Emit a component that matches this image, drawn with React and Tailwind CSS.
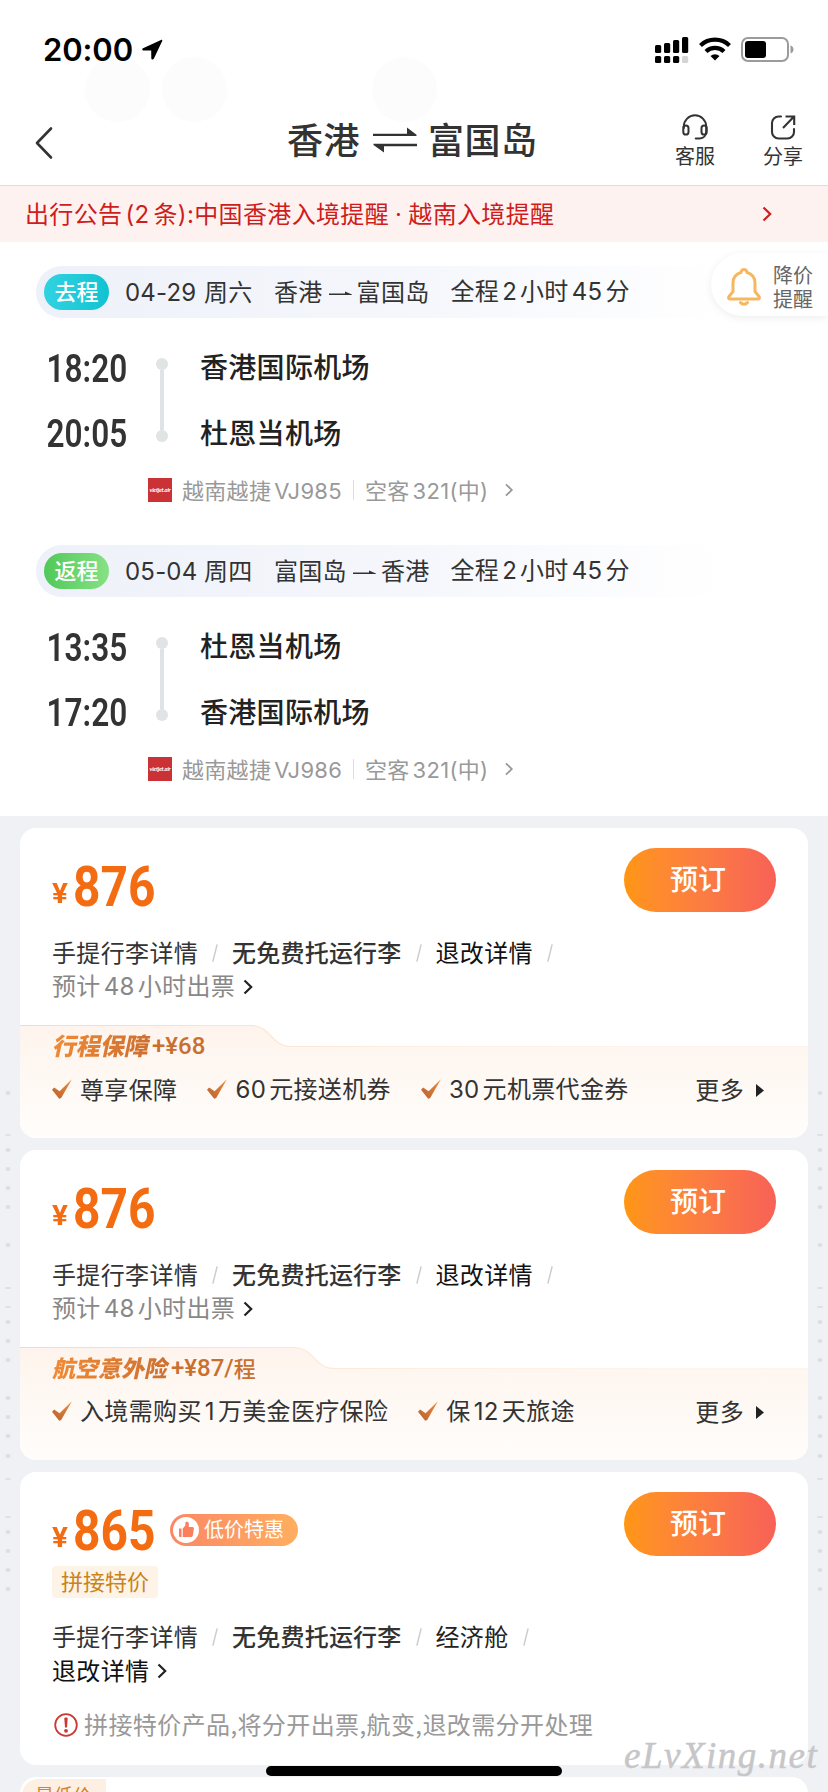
import clsx from 'clsx'

const LEGS = [
    {
        tag: '去程',
        tagClass: 'bg-gradient-to-r from-[#30d2e0] to-[#0fc3d2]',
        date: '04-29',
        week: '周六',
        from: '香港',
        to: '富国岛',
        rows: [
            { time: '18:20', airport: '香港国际机场' },
            { time: '20:05', airport: '杜恩当机场' },
        ],
        flight: '越南越捷VJ985',
    },
    {
        tag: '返程',
        tagClass: 'bg-gradient-to-r from-[#4fc957] to-[#86e186]',
        date: '05-04',
        week: '周四',
        from: '富国岛',
        to: '香港',
        rows: [
            { time: '13:35', airport: '杜恩当机场' },
            { time: '17:20', airport: '香港国际机场' },
        ],
        flight: '越南越捷VJ986',
    },
]

const DOTS = [1093, 1150, 1169, 1188, 1207, 1245, 1322, 1341, 1360, 1398, 1417, 1436, 1456, 1532, 1551, 1570, 1589]
const DASHES = [1135, 1288, 1307, 1479, 1517]

// Chinese copy with latin runs set in Inter and a hair of space next to the hanzi
function Mixed({ text }) {
    return text.split(/([0-9A-Za-z]+)/).map((part, i, parts) =>
        i % 2 ? (
            <span key={i} className={clsx("font-['Inter']", parts[i - 1] && 'ml-[3px]', parts[i + 1] && 'mr-[3px]')}>
                {part}
            </span>
        ) : (
            part
        )
    )
}

function Chevron({ className }) {
    return (
        <svg viewBox="0 0 10 16" className={className} fill="none" stroke="currentColor">
            <path d="M1.5 1.5 8.2 8l-6.7 6.5" />
        </svg>
    )
}

function StatusBar() {
    return (
        <div className="flex h-24 items-start pl-[43px] pr-[34px] pt-8 text-black">
            <span className="font-['Inter'] text-[31px] font-semibold leading-9 tracking-[-0.1px]">20:00</span>
            <svg viewBox="0 0 22 22" className="ml-2 mt-[7px] size-[22px]">
                <path d="M20 1 2 9.200c-1.200.6-.9 2.200.4 2.200h7.800l.1 7.800c0 1.500 1.900 1.800 2.500.5L21.200 2.100C21.600 1.200 20.800.6 20 1Z" fill="currentColor" />
            </svg>
            <div className="ml-auto flex items-start pt-[4px]">
                <svg viewBox="0 0 34 28" className="mt-[1px] h-7 w-[34px]">
                    <rect x="0" y="8" width="6.200" height="8" rx="1.500" />
                    <rect x="9" y="6" width="6.200" height="10" rx="1.500" />
                    <rect x="18" y="3" width="6.200" height="13" rx="1.500" />
                    <rect x="27" y="0" width="6.200" height="16" rx="1.500" />
                    <rect x="0" y="19" width="6.200" height="7" rx="1.500" />
                    <rect x="9" y="19" width="6.200" height="7" rx="1.500" />
                    <rect x="18" y="19" width="6.200" height="7" rx="1.500" />
                    <rect x="27" y="19" width="6.200" height="7" rx="1.500" fill="#d4d4d4" />
                </svg>
                <svg viewBox="0 0 32 24" className="ml-[10px] mt-[1px] h-6 w-8" fill="none" stroke="#000" strokeWidth="4.200">
                    <path d="M1.500 8.500a21 21 0 0 1 29 0" />
                    <path d="M7 14.500a13 13 0 0 1 18 0" />
                    <path d="M16 23.500l-4.500-4.600a6.600 6.600 0 0 1 9 0Z" fill="#000" stroke="none" />
                </svg>
                <svg viewBox="0 0 53 25" className="ml-[10px] mt-[1px] h-[25px] w-[53px]">
                    <rect x="1" y="1" width="46" height="23" rx="6" fill="none" stroke="#9b9b9b" strokeWidth="2" />
                    <rect x="4" y="4" width="21" height="17" rx="3" />
                    <path d="M49.500 8.500c2 .6 3 2.200 3 4s-1 3.400-3 4Z" fill="#9b9b9b" />
                </svg>
            </div>
        </div>
    )
}

function Header() {
    return (
        <header className="flex h-[90px] items-start text-[#333]">
            <svg viewBox="0 0 20 34" className="ml-[34px] mt-[30px] h-[34px] w-5" fill="none" stroke="currentColor" strokeWidth="2.600" strokeLinecap="round" strokeLinejoin="round">
                <path d="M17 2.500 3 17l14 14.500" />
            </svg>
            <h1 className="ml-[233px] mt-[17px] flex items-center whitespace-nowrap text-[36px] font-medium leading-[50px] tracking-[0.5px]">
                <span>香港</span>
                <svg viewBox="0 0 46 28" className="ml-[12px] mr-[10px] mt-[4px] h-7 w-[46px]" fill="currentColor">
                    <path d="M1 7.700h34V1.500l9.500 7.300v1.200H1Z" />
                    <path d="M45 20.300H12v6.300L1.500 19v-1.200H45Z" />
                </svg>
                <span>富国岛</span>
            </h1>
            <div className="ml-auto mr-[25px] mt-[18px] flex gap-[48px] text-[20px] leading-7">
                <div className="flex w-10 flex-col items-center">
                    <svg viewBox="0 0 26 26" className="size-[26px]" fill="none" stroke="currentColor" strokeWidth="2" strokeLinecap="round">
                        <path d="M1.800 14v-1.500a11.200 11.200 0 0 1 22.400 0V17c0 4.500-2.500 7.500-6.500 7.500h-4" />
                        <rect x="1.300" y="11.500" width="5.200" height="9" rx="2.600" />
                        <rect x="19.500" y="11.500" width="5.200" height="9" rx="2.600" />
                    </svg>
                    <span className="mt-[2px]">客服</span>
                </div>
                <div className="flex w-10 flex-col items-center">
                    <svg viewBox="0 0 26 26" className="size-[26px]" fill="none" stroke="currentColor" strokeWidth="2.100">
                        <path d="M11 2.500H8.500a6.500 6.500 0 0 0-6.500 6.500v9a6.500 6.500 0 0 0 6.500 6.500h9A6.500 6.500 0 0 0 24 18v-3" strokeLinecap="round" />
                        <path d="M15.500 2.500h8.700V11M23.500 3 13 14" />
                    </svg>
                    <span className="mt-[2px]">分享</span>
                </div>
            </div>
        </header>
    )
}

function Leg({ leg }) {
    return (
        <section className="h-[279px]">
            <div className="ml-9 flex h-[52px] w-[690px] items-center rounded-l-full bg-gradient-to-r from-[#eef1f9] via-[#f5f7fc] via-55% to-white pl-2">
                <span className={clsx('flex h-9 w-[65px] justify-center rounded-full text-[22px] font-medium leading-[33px] text-white', leg.tagClass)}>
                    {leg.tag}
                </span>
                <div className="flex items-center whitespace-nowrap pb-[2px] text-[24px] tracking-[0.3px] text-[#333]">
                    <span className="ml-[16px] mt-[3px] w-[79px] font-['Inter'] tracking-[0.2px]">{leg.date}</span>
                    <span className="w-[70px]">{leg.week}</span>
                    <span>{leg.from}</span>
                    <svg viewBox="0 0 24 10" className="ml-[6px] mr-[4px] mt-[5px] h-[10px] w-6">
                        <path d="M0 6h23v-.6L16 2.500v2H0Z" fill="#333" />
                    </svg>
                    <span>{leg.to}</span>
                    <span className="ml-[21px]">
                        <Mixed text="全程2小时45分" />
                    </span>
                </div>
            </div>
            <div className="mt-[17px] flex">
                <div className="flex w-[127px] flex-col items-end pt-[2px]">
                    {leg.rows.map((row) => (
                        <span key={row.time} className="h-[65px] origin-right scale-x-[0.83] font-['Roboto'] text-[38px] font-semibold leading-[65px] text-[#333]">
                            {row.time}
                        </span>
                    ))}
                </div>
                <div className="ml-[29px] mt-[23px] flex w-3 flex-col items-center">
                    <i className="size-3 rounded-full bg-[#e0e4e4]" />
                    <i className="h-[60px] w-1 bg-[#e0e3e5]" />
                    <i className="size-3 rounded-full bg-[#e0e4e4]" />
                </div>
                <div className="ml-[32px] flex flex-col text-[28px] font-medium tracking-[0.3px] text-[#222]">
                    {leg.rows.map((row) => (
                        <span key={row.airport} className="h-[66px] leading-[62px]">
                            {row.airport}
                        </span>
                    ))}
                </div>
            </div>
            <div className="ml-[148px] mt-[11px] flex h-[24px] items-center whitespace-nowrap text-[22px] leading-6 text-[#999]">
                <span className="flex size-6 items-center justify-center overflow-hidden bg-[#cb3236] font-['Lato'] text-[6px] font-bold italic tracking-[-0.3px] text-white">
                    vietjet.air
                </span>
                <span className="ml-[10px] w-[171px] tracking-[0.3px]">
                    <Mixed text={leg.flight} />
                </span>
                <i className="h-5 w-px bg-[#ddd]" />
                <span className="ml-[11px] tracking-[0.3px]">
                    空客<span className="ml-[3px] font-['Inter']">321(</span>中<span className="font-['Inter']">)</span>
                </span>
                <Chevron className="ml-[16px] h-[14px] w-[10px] stroke-[2]" />
            </div>
        </section>
    )
}

function Check() {
    return (
        <svg viewBox="0 0 20 20" className="mr-[8px] h-5 w-5 shrink-0">
            <defs>
                <linearGradient id="check" x1="0" y1="1" x2="1" y2="0">
                    <stop offset="0" stopColor="#b8622f" />
                    <stop offset="1" stopColor="#ef8a3c" />
                </linearGradient>
            </defs>
            <path d="M0 10.800 2.200 8.600 7.600 12.200 19.900.300 9.200 19 7.200 19.800Z" fill="url(#check)" />
        </svg>
    )
}

function Price({ value }) {
    return (
        <div className="flex h-[60px] items-baseline text-[#f46c11]">
            <span className="relative -top-[3px] w-[21px] origin-left scale-x-110 font-['Roboto'] text-[27px] font-bold">¥</span>
            <span className="w-[81px] origin-left scale-x-[0.855] font-['Roboto'] text-[56px] font-bold leading-[60px]">{value}</span>
        </div>
    )
}

function BookButton() {
    return (
        <button className="ml-auto h-16 w-[152px] rounded-full bg-gradient-to-r from-[#ff960f] to-[#f86156] pb-1 pr-1 text-[28px] font-medium leading-[60px] text-white">
            预订
        </button>
    )
}

function Slash() {
    return (
        <svg viewBox="0 0 7 20" className="mx-[14px] mt-[2px] h-5 w-[6px]">
            <path d="M6 0 1 20" stroke="#ccc" strokeWidth="1.700" />
        </svg>
    )
}

function Details({ last, lastClass = 'text-[#111]', next, nextClass }) {
    return (
        <div className="whitespace-nowrap text-[24px] leading-[34px] tracking-[0.35px] text-[#333]">
            <div className="flex h-[35px] items-center">
                <span>手提行李详情</span>
                <Slash />
                <span className="font-medium tracking-[0.2px]">无免费托运行李</span>
                <Slash />
                <span className={lastClass}>{last}</span>
                <Slash />
            </div>
            <div className="flex h-[34px] items-center">
                <span className={nextClass}>
                    <Mixed text={next} />
                </span>
                <Chevron className="ml-2 mt-[2px] h-4 w-[10px] stroke-[2.200] text-[#222]" />
            </div>
        </div>
    )
}

function Extras({ title, titleClass, price, unit, curve, items }) {
    return (
        <div className="relative h-[113px]">
            <svg viewBox="0 0 788 113" className="absolute inset-0 h-[113px] w-[788px]" fill="none">
                <defs>
                    <linearGradient id="panel" x1="0" y1="0" x2="0" y2="1">
                        <stop offset="0" stopColor="#fef4ed" />
                        <stop offset="1" stopColor="#fffdfb" />
                    </linearGradient>
                    <linearGradient id="edge" gradientUnits="userSpaceOnUse" x1="0" y1="0" x2="788" y2="0">
                        <stop offset="0" stopColor="#fbd9b6" />
                        <stop offset="0.500" stopColor="#fdeee0" />
                        <stop offset="0.800" stopColor="#fef4ed" />
                    </linearGradient>
                </defs>
                <path d={`M0 .5H${curve}c22 0 20 21 42 21H788V113H0Z`} fill="url(#panel)" />
                <path d={`M0 .5H${curve}c22 0 20 21 42 21H788`} stroke="url(#edge)" strokeWidth="1.200" />
            </svg>
            <div className="relative flex h-[40px] items-center whitespace-nowrap pl-[34px]">
                <span className={clsx('-skew-x-12 bg-gradient-to-r from-[#f08a35] to-[#cd6f30] bg-clip-text font-black text-transparent', titleClass)}>
                    {title}
                </span>
                <span className="ml-[2px] mt-[2px] font-['Roboto'] text-[24px] font-medium text-[#c9702f]">{price}</span>
                {unit && <span className="text-[22px] font-medium text-[#c9702f]">{unit}</span>}
            </div>
            <div className="relative flex h-[48px] items-center whitespace-nowrap pl-8 pr-11 text-[24px] tracking-[0.35px] text-[#333]">
                {items.map((item) => (
                    <span key={item} className="mr-[30px] flex items-center">
                        <Check />
                        <span>
                            <Mixed text={item} />
                        </span>
                    </span>
                ))}
                <span className="ml-auto">更多</span>
                <svg viewBox="0 0 8 13" className="ml-[12px] mt-[2px] h-[13px] w-2">
                    <path d="M0 0v13l8-6.500Z" fill="#222" />
                </svg>
            </div>
        </div>
    )
}

function OfferCard({ price, extras }) {
    return (
        <article className="h-[310px] overflow-hidden rounded-2xl bg-white">
            <div className="h-[197px] pl-8 pr-8 pt-5">
                <div className="flex h-[86px]">
                    <div className="pt-[9px]">
                        <Price value={price} />
                    </div>
                    <BookButton />
                </div>
                <Details last="退改详情" next="预计48小时出票" nextClass="text-[#888]" />
            </div>
            <Extras {...extras} />
        </article>
    )
}

function DealCard() {
    return (
        <article className="h-[293px] rounded-2xl bg-white pl-8 pr-8 pt-5">
            <div className="flex h-[74px]">
                <div className="pt-[9px]">
                    <Price value="865" />
                </div>
                <div className="ml-[16px] mt-[22px] flex h-8 w-[128px] items-center rounded-full bg-gradient-to-r from-[#fb8764] to-[#ffae5f] pl-[3px] text-[20px] text-white">
                    <svg viewBox="0 0 26 26" className="mr-[5px] size-[26px]">
                        <circle cx="13" cy="13" r="13" fill="#fff" />
                        <path d="M6 11.500h2.500v8.500H7a1 1 0 0 1-1-1ZM9.700 11.500l2.700-2.900V5.800c0-1.700 3.400-1.600 3.400.8v3.300h3.300c1.300 0 2 .8 1.800 1.900l-1 6.400c-.2 1.100-.9 1.800-1.900 1.800H9.700Z" fill="#fb7f5c" />
                    </svg>
                    <span className="-mt-[2px]">低价特惠</span>
                </div>
                <BookButton />
            </div>
            <div className="flex h-8 w-[106px] justify-center rounded bg-[#fef3e7] text-[22px] leading-[28px] text-[#c98419]">拼接特价</div>
            <div className="mt-[20px]">
                <Details last="经济舱" lastClass="text-[#222]" next="退改详情" nextClass="text-[#111]" />
            </div>
            <div className="mt-[20px] flex h-9 items-center whitespace-nowrap text-[24px] tracking-[0.4px] text-[#999]">
                <svg viewBox="0 0 24 24" className="ml-[2px] mr-[6px] size-6" fill="none" stroke="#c93a35" strokeWidth="1.800">
                    <circle cx="12" cy="12" r="10.800" />
                    <path d="M10.300 5.500c0-1.200 3.400-1.200 3.400 0l-.7 9h-2Z" fill="#c93a35" stroke="none" />
                    <circle cx="12" cy="17.800" r="1.900" fill="#c93a35" stroke="none" />
                </svg>
                <span className="-mt-[2px]">拼接特价产品,将分开出票,航变,退改需分开处理</span>
            </div>
        </article>
    )
}

function SideMarks({ className }) {
    return (
        <svg viewBox="0 0 8 776" className={clsx('absolute top-[816px] h-[776px] w-2', className)} stroke="#d8dade">
            {DOTS.map((y) => (
                <path key={y} d={`M1.500 ${y - 816}h5M2.500 ${y - 818}l3 4M5.500 ${y - 818}l-3 4`} strokeWidth="1.100" />
            ))}
            {DASHES.map((y) => (
                <path key={y} d={`M1.500 ${y - 816}h5`} strokeWidth="1.500" />
            ))}
        </svg>
    )
}

export default function App() {
    return (
        <div className="relative h-[1792px] w-[828px] overflow-hidden bg-white font-['Noto_Sans_CJK_SC',sans-serif]">
            {/* faint circles behind the header */}
            <i className="absolute left-[85px] top-[57px] size-[65px] rounded-full bg-[#fcfcfc]" />
            <i className="absolute left-[162px] top-[57px] size-[65px] rounded-full bg-[#fcfcfc]" />
            <i className="absolute left-[372px] top-[57px] size-[65px] rounded-full bg-[#fcfcfc]" />

            <div className="relative">
                <StatusBar />
                <Header />
            </div>

            <div className="mt-[-1px] flex h-[57px] items-center whitespace-nowrap border-t border-[#e3dcdb] bg-[#fef2f0] pl-[25px] pr-[56px] text-[24px] tracking-[0.35px] text-[#cf1c1c]">
                <span>
                    出行公告<span className="ml-[3px] font-['Inter']">(2</span>
                    <span className="ml-[4px]">条</span>
                    <span className="font-['Inter']">):</span>中国香港入境提醒<span className="mx-[6px] font-['Inter']">·</span>越南入境提醒
                </span>
                <Chevron className="ml-auto h-4 w-[10px] stroke-[2.200]" />
            </div>

            <main className="h-[574px] pt-[24px]">
                {LEGS.map((leg) => (
                    <Leg key={leg.tag} leg={leg} />
                ))}
            </main>

            {/* price alert floating button */}
            <div className="absolute right-0 top-[253px] flex h-[63px] w-[117px] items-center rounded-l-full bg-white pl-4 shadow-[0_2px_8px_rgba(0,0,0,0.07)]">
                <svg viewBox="0 0 34 38" className="mt-[5px] h-[38px] w-[34px]" fill="none" stroke="#f5b762" strokeWidth="3" strokeLinejoin="round" strokeLinecap="round">
                    <path d="M14 4.500a3 3 0 0 1 6 0c5 1.500 8 5 8 10.500v8.500l4 5c.8 1.200.4 2.500-1 2.500H3c-1.400 0-1.800-1.300-1-2.500l4-5V15c0-5.500 3-9 8-10.500Z" />
                    <path d="M13.500 34.500c1.800 2.300 5.200 2.300 7 0" />
                </svg>
                <span className="ml-3 mt-[5px] w-10 text-[20px] leading-6 text-[#666]">降价提醒</span>
            </div>

            <div className="flex flex-col gap-3 bg-[#eff1f5] px-5 pt-3">
                <OfferCard
                    price="876"
                    extras={{ title: '行程保障', titleClass: 'text-[24px]', price: '+¥68', curve: 230, items: ['尊享保障', '60元接送机券', '30元机票代金券'] }}
                />
                <OfferCard
                    price="876"
                    extras={{ title: '航空意外险', titleClass: 'text-[23px]', price: '+¥87/', unit: '程', curve: 273, items: ['入境需购买1万美金医疗保险', '保12天旅途'] }}
                />
                <DealCard />
                <article className="h-20 overflow-hidden rounded-t-2xl bg-white pl-[2px] pt-[2px]">
                    <div className="h-9 w-[84px] rounded-tl-2xl bg-[#fdf0e3] pl-[13px] text-[19px] leading-[32px] text-[#d9822b]">最低价</div>
                </article>
            </div>

            <SideMarks className="left-1" />
            <SideMarks className="left-[816px]" />

            <i className="absolute left-[266px] top-[1766px] h-[10px] w-[296px] rounded-full bg-black" />
            <span className="absolute left-[624px] top-[1734px] font-['Liberation_Serif',serif] text-[37px] italic leading-[44px] tracking-[1.500px] text-[#c6c6c8] [-webkit-text-stroke:0.5px_#c6c6c8]">
                eLvXing.net
            </span>
        </div>
    )
}
